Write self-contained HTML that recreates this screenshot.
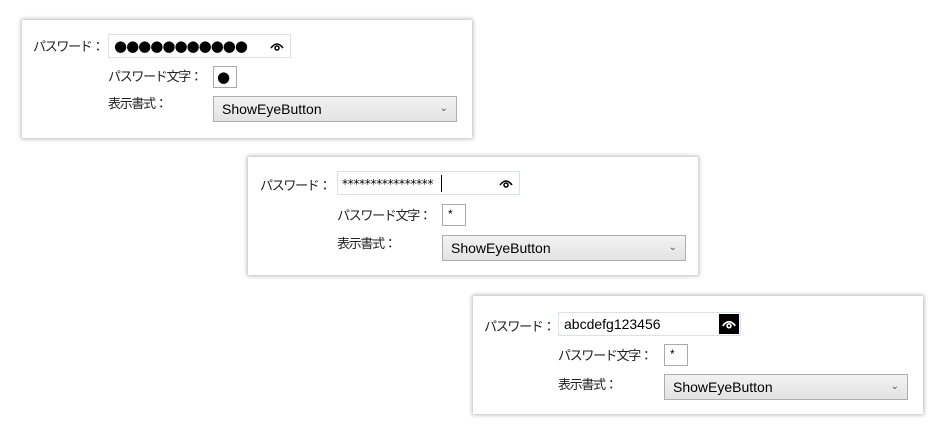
<!DOCTYPE html>
<html><head><meta charset="utf-8"><style>
body{margin:0;width:940px;height:432px;background:#fff;position:relative;overflow:hidden;font-family:"Liberation Sans","Noto Sans CJK JP",sans-serif;font-size:13px;color:#000}
.p{position:absolute;width:450px;height:118px;background:#fff;box-shadow:0 0 4px 1px rgba(0,0,0,.28)}
.p div{position:absolute}
.l{line-height:16px;font-size:13px;letter-spacing:-1.3px;font-family:"Noto Sans CJK JP",sans-serif;white-space:nowrap;color:#222}
.tb{left:86px;top:14px;width:181px;height:22px;border:1px solid #d9e1ea;background:#fff}
.cb{left:191px;top:46px;width:22px;height:20px;border:1px solid #aaa;background:#fff}
.co{left:191px;top:76px;width:242px;height:24px;border:1px solid #adadad;background:linear-gradient(#f2f2f2,#e3e3e3);font-size:14px;line-height:24px}
.co span{position:absolute;left:8px}
.co i{position:absolute;right:8px;top:0;font-style:normal;font-size:10px;color:#555}
.eye{position:absolute;right:4px;top:3px;width:18px;height:16px}
.dots{font-family:"DejaVu Sans",sans-serif}
</style></head><body>

<div class="p" style="left:22px;top:20px">
 <div class="l" style="left:11px;top:18px">パスワード：</div>
 <div class="tb"><span class="dots" style="position:absolute;left:5px;top:0;font-size:15px;line-height:22px;letter-spacing:-1px">●●●●●●●●●●●</span>
  <svg class="eye" viewBox="0 0 18 16"><path d="M3 10 Q9 2 15 10" fill="none" stroke="#000" stroke-width="1.6"/><circle cx="9" cy="10" r="2" fill="none" stroke="#000" stroke-width="1.5"/></svg></div>
 <div class="l" style="left:86px;top:48px">パスワード文字：</div>
 <div class="cb"><span class="dots" style="position:absolute;left:3px;top:0;font-size:15px;line-height:20px">●</span></div>
 <div class="l" style="left:86px;top:75px">表示書式：</div>
 <div class="co"><span>ShowEyeButton</span><i>⌄</i></div>
</div>

<div class="p" style="left:248px;top:157px">
 <div class="l" style="left:12px;top:20px">パスワード：</div>
 <div class="tb" style="left:89px"><span class="dots" style="position:absolute;left:4px;top:4px;font-size:12px;line-height:16px;letter-spacing:-0.3px">****************</span><span style="position:absolute;left:103px;top:3px;width:1px;height:17px;background:#000"></span>
  <svg class="eye" viewBox="0 0 18 16"><path d="M3 10 Q9 2 15 10" fill="none" stroke="#000" stroke-width="1.6"/><circle cx="9" cy="10" r="2" fill="none" stroke="#000" stroke-width="1.5"/></svg></div>
 <div class="l" style="left:89px;top:50px">パスワード文字：</div>
 <div class="cb" style="left:194px;top:47px"><span style="position:absolute;left:5px;top:2px;font-size:12px">*</span></div>
 <div class="l" style="left:89px;top:78px">表示書式：</div>
 <div class="co" style="left:194px;top:78px"><span>ShowEyeButton</span><i>⌄</i></div>
</div>

<div class="p" style="left:473px;top:296px">
 <div class="l" style="left:11px;top:22px">パスワード：</div>
 <div class="tb" style="left:85px;top:16px"><span style="position:absolute;left:5px;top:3px;font-size:14px;line-height:16px">abcdefg123456</span>
  <div style="position:absolute;right:1px;top:1px;width:20px;height:20px;background:#000"><svg style="position:absolute;left:2px;top:2px" width="16" height="16" viewBox="0 0 18 16"><path d="M2 10 Q9 1 16 10" fill="none" stroke="#fff" stroke-width="2"/><circle cx="9" cy="10" r="2.2" fill="none" stroke="#fff" stroke-width="1.8"/></svg></div></div>
 <div class="l" style="left:85px;top:51px">パスワード文字：</div>
 <div class="cb" style="left:191px;top:48px"><span style="position:absolute;left:5px;top:2px;font-size:12px">*</span></div>
 <div class="l" style="left:85px;top:80px">表示書式：</div>
 <div class="co" style="left:191px;top:78px"><span>ShowEyeButton</span><i>⌄</i></div>
</div>

</body></html>
